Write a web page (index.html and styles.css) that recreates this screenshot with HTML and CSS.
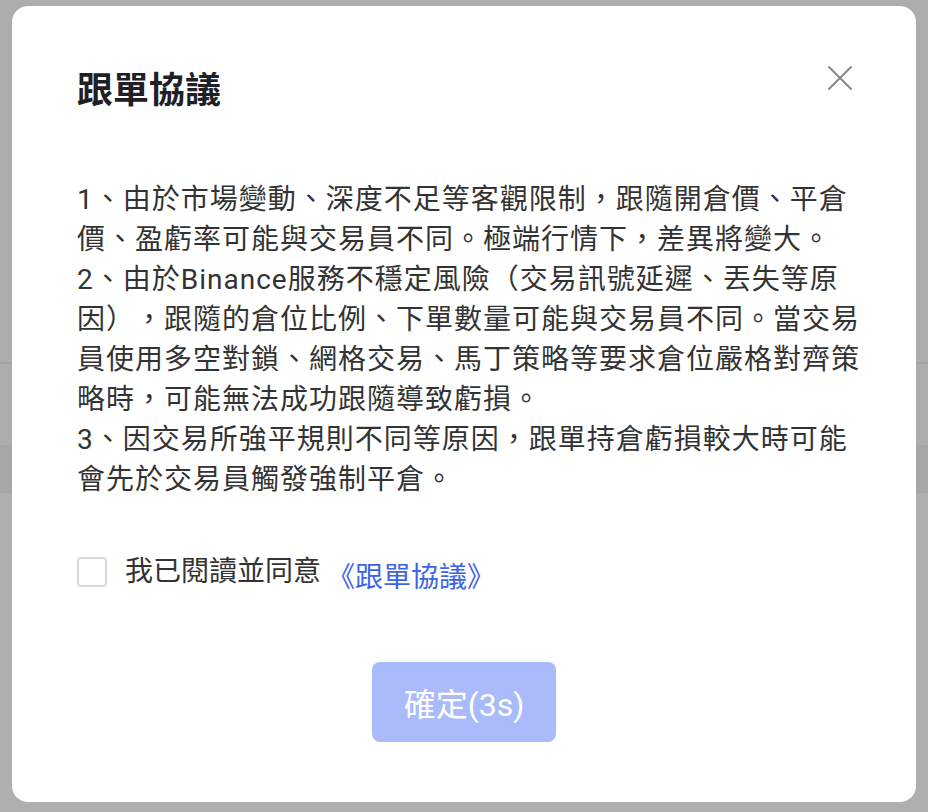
FILE: index.html
```html
<!DOCTYPE html>
<html lang="zh-Hant">
<head>
<meta charset="utf-8">
<title>跟單協議</title>
<link rel="stylesheet" href="styles.css">
</head>
<body>
<div class="modal">
  <div class="modal-header">
    <h1 class="modal-title">跟單協議</h1>
    <button class="close-btn" aria-label="關閉">
      <svg width="24" height="24" viewBox="0 0 24 24" fill="none" stroke="#8a8a8a" stroke-width="2" stroke-linecap="round"><path d="M1 1L23 23M23 1L1 23"/></svg>
    </button>
  </div>
  <div class="modal-body">
    <p>1、由於市場變動、深度不足等客觀限制，跟隨開倉價、平倉<br>價、盈虧率可能與交易員不同。極端行情下，差異將變大。</p>
    <p>2、由於Binance服務不穩定風險（交易訊號延遲、丟失等原<br>因），跟隨的倉位比例、下單數量可能與交易員不同。當交易<br>員使用多空對鎖、網格交易、馬丁策略等要求倉位嚴格對齊策<br>略時，可能無法成功跟隨導致虧損。</p>
    <p>3、因交易所強平規則不同等原因，跟單持倉虧損較大時可能<br>會先於交易員觸發強制平倉。</p>
  </div>
  <label class="agree">
    <span class="checkbox"></span>
    <span class="agree-text">我已閱讀並同意</span>
    <a class="agree-link" href="#">《跟單協議》</a>
  </label>
  <div class="modal-footer">
    <button class="confirm-btn">確定(3s)</button>
  </div>
</div>
</body>
</html>
```
FILE: styles.css
```css
html, body {
  margin: 0;
  height: 100%;
}
body {
  padding: 6px 12px;
  box-sizing: border-box;
  font-family: "Roboto", "Noto Sans CJK TC", sans-serif;
  text-spacing-trim: space-all;
  background: linear-gradient(to bottom,
    #adadad 0, #adadad 362px,
    #a6a6a6 362px, #a6a6a6 364px,
    #adadad 364px, #adadad 445px,
    #a7a7a8 445px, #a7a7a8 493px,
    #afafaf 493px);
}
.modal {
  width: 904px;
  height: 796px;
  box-sizing: border-box;
  background: #fff;
  border-radius: 16px;
  padding: 60px 64px 0 65px;
}
.modal-header {
  display: flex;
  justify-content: space-between;
  align-items: flex-start;
}
.modal-title {
  margin: 0;
  font-size: 36px;
  line-height: 50px;
  font-weight: 700;
  color: #1e2026;
}
.close-btn {
  border: 0;
  background: none;
  padding: 0;
  width: 24px;
  height: 24px;
  margin-top: 0;
  display: flex;
}
.modal-body {
  margin-top: 64px;
  font-size: 28px;
  line-height: 40px;
  color: #333;
  letter-spacing: 1px;
  white-space: nowrap;
}
.modal-body p {
  margin: 0;
}
.agree {
  display: flex;
  align-items: center;
  margin-top: 52px;
  height: 40px;
  font-size: 28px;
  line-height: 40px;
}
.checkbox {
  width: 30px;
  height: 30px;
  box-sizing: border-box;
  border: 2px solid #d9d9d9;
  border-radius: 4px;
  margin-right: 18px;
}
.agree-text {
  color: #333;
}
.agree-link {
  color: #3d63e6;
  text-decoration: none;
  margin-left: 6px;
  padding-top: 12px;
}
.modal-footer {
  display: flex;
  justify-content: center;
  margin-top: 70px;
}
.confirm-btn {
  width: 184px;
  height: 80px;
  border: 0;
  border-radius: 8px;
  background: #aabbfc;
  color: #fff;
  font-family: "Roboto", "Noto Sans CJK TC", sans-serif;
  font-size: 32px;
  margin-right: 1px;
}
```
